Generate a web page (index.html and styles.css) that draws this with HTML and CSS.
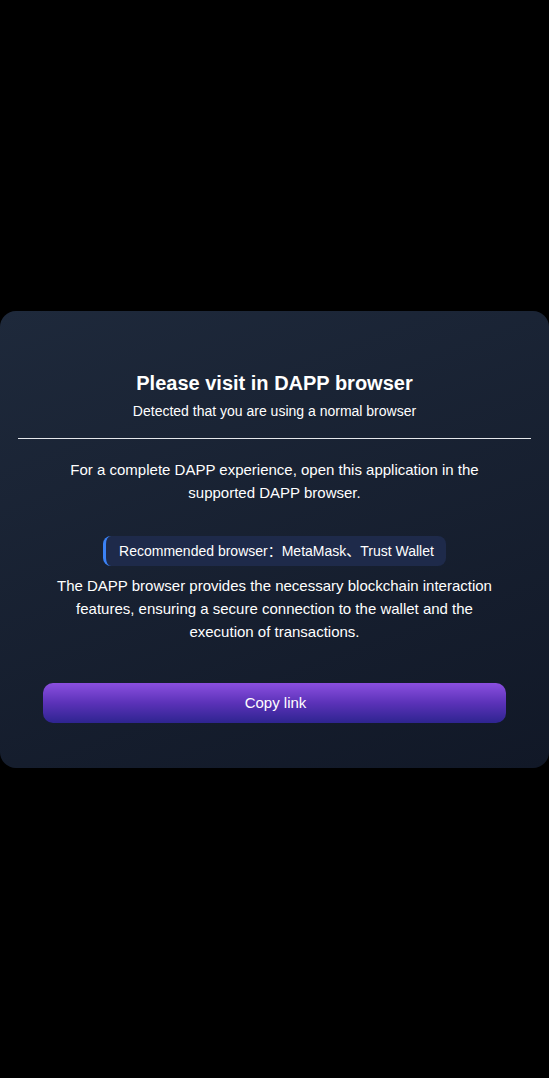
FILE: index.html
```html
<!DOCTYPE html>
<html lang="en">

<head>
    <meta charset="UTF-8">
    <meta name="viewport" content="width=device-width, initial-scale=1.0">
    <title>Please visit in DAPP browser</title>
    <link rel="stylesheet" href="styles.css">
</head>

<body>

    <div class="overlay">
        <div class="dialog">
            <h2 class="dialog-title">Please visit in DAPP browser</h2>
            <p class="dialog-sub">Detected that you are using a normal browser</p>
            <hr class="divider">
            <p class="dialog-text">For a complete DAPP experience, open this application in the supported DAPP browser.</p>
            <div class="tip">Recommended browser：MetaMask、Trust Wallet</div>
            <p class="dialog-text dialog-text-tight">The DAPP browser provides the necessary blockchain interaction features, ensuring a secure connection to the wallet and the execution of transactions.</p>
            <button class="btn" id="copyBtn">Copy link</button>
        </div>
    </div>

    <script>
        document.getElementById('copyBtn').addEventListener('click', () => {
            if (navigator.clipboard) {
                navigator.clipboard.writeText(location.href);
            }
        });
    </script>

</body>

</html>
```

FILE: styles.css
```css
body {
    margin: 0;
    background-color: #000;
    font-family: 'Liberation Sans', Arial, 'Noto Sans CJK SC', sans-serif;
    color: #fff;
}

.overlay {
    min-height: 100vh;
    display: flex;
    align-items: center;
    justify-content: center;
}

.dialog {
    width: 100%;
    box-sizing: border-box;
    padding: 60px 18px 45px;
    background: linear-gradient(160deg, #1e293b 0%, #111827 100%);
    border-radius: 16px;
    text-align: center;
}

.dialog-title {
    margin: 0;
    font-size: 20px;
    line-height: 24px;
    font-weight: bold;
}

.dialog-sub {
    margin: 7px 0 0;
    font-size: 14px;
    line-height: 18px;
}

.divider {
    margin: 18px 0 19px;
    border: none;
    border-top: 1px solid #e5e7eb;
}

.dialog-text {
    margin: 0 auto;
    max-width: 430px;
    font-size: 15px;
    line-height: 23px;
}

.dialog-text-tight {
    max-width: 450px;
}

.tip {
    display: inline-block;
    margin: 32px 0 8px;
    padding: 6px 12px 6px 13px;
    font-size: 14px;
    line-height: 18px;
    background-color: #1e2a4a;
    border-left: 3px solid #3b82f6;
    border-radius: 8px;
}

.btn {
    display: block;
    width: calc(100% - 50px);
    margin: 40px auto 0;
    height: 40px;
    padding-left: 8px;
    font-family: inherit;
    font-size: 15px;
    color: #fff;
    border: none;
    border-radius: 10px;
    background: linear-gradient(180deg, #8b4fe0 0%, #5b32b8 50%, #2e2490 100%);
    cursor: pointer;
}
```
